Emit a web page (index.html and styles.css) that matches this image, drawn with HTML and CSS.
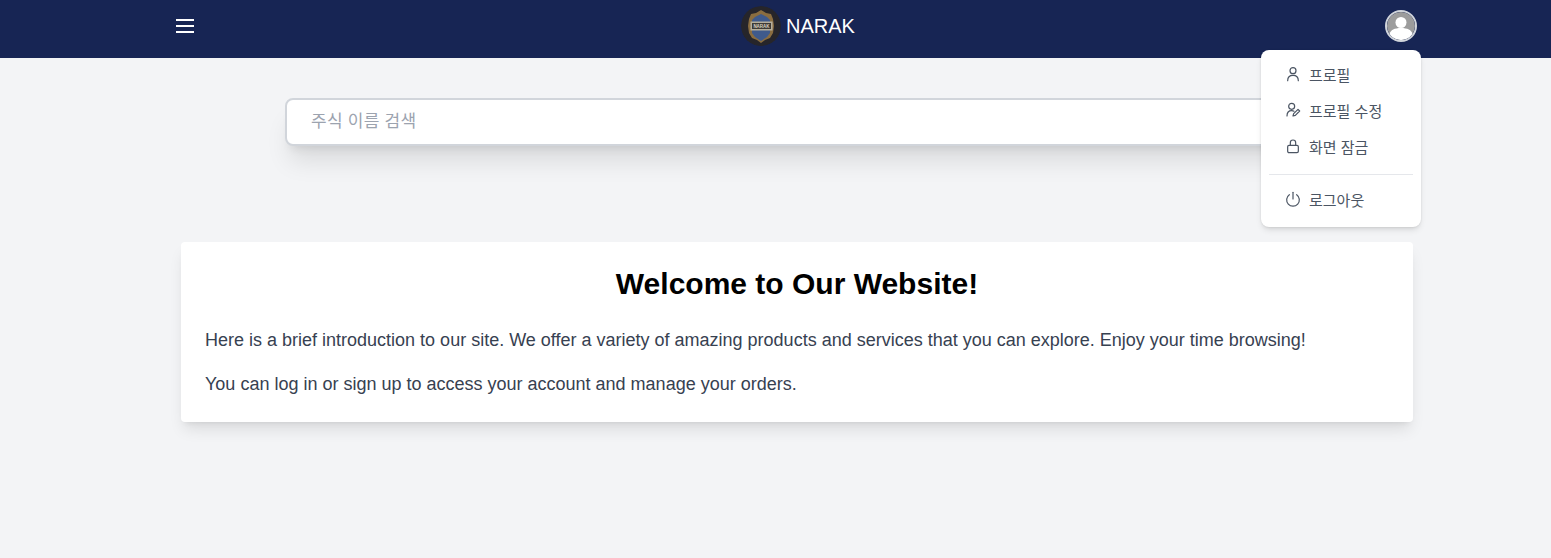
FILE: index.html
```html
<!DOCTYPE html>
<html lang="ko">
<head>
    <meta charset="UTF-8">
    <meta name="viewport" content="width=device-width, initial-scale=1.0">
    <title>NARAK</title>
    <link rel="stylesheet" href="styles.css">
</head>
<body>
    <header class="topbar">
        <button class="menu-btn" type="button" aria-label="menu">
            <svg width="18" height="14" viewBox="0 0 18 14"><path d="M0 1h18M0 7h18M0 13h18" stroke="#fff" stroke-width="2"/></svg>
        </button>
        <a class="brand" href="#">
            <svg class="brand-logo" width="40" height="40" viewBox="0 0 40 40">
                <circle cx="20" cy="20" r="20" fill="#26252a"/>
                <path d="M20 4l5 3 5 1 2 5 1 7-1 7-3 5-5 2-4 3-4-3-5-2-3-5-1-7 1-7 2-5 5-1z" fill="#8a6d40"/>
                <path d="M20 8l6 3 3 3v13l-3 4-6 4-6-4-3-4V14l3-3z" fill="#3f5a8c"/>
                <rect x="9.500" y="15.500" width="22" height="9" fill="#b5ae9c"/>
                <rect x="11" y="17" width="19" height="6" fill="#3e3a35"/>
                <text class="logo-text" x="20.500" y="21.800">NARAK</text>
            </svg>
            <span class="brand-name">NARAK</span>
        </a>
        <button class="avatar" type="button" aria-label="profile">
            <svg width="28" height="28" viewBox="0 0 28 28">
                <circle cx="14" cy="14" r="14" fill="#9c9c9c"/>
                <circle cx="14" cy="10.500" r="5.500" fill="#fff"/>
                <path d="M2.500 22c1-4 5-6 11.500-6s10.500 2 11.500 6a14 14 0 0 1-23 0z" fill="#fff"/>
            </svg>
        </button>
    </header>

    <div class="dropdown">
        <a class="dropdown-item" href="#">
            <svg class="item-icon" width="16" height="16" viewBox="0 0 24 24"><circle cx="12" cy="7" r="4.500"/><path d="M4 22c0-5 3.500-8 8-8s8 3 8 8"/></svg>
            <span>프로필</span>
        </a>
        <a class="dropdown-item" href="#">
            <svg class="item-icon" width="16" height="16" viewBox="0 0 24 24"><circle cx="10" cy="6.500" r="4.500"/><path d="M3 21c0-5 2.500-8 7-8 1.500 0 2.500.3 3.500.8"/><path d="M12 21l1-3.500 6.500-6.500 2.500 2.500-6.500 6.500z"/></svg>
            <span>프로필 수정</span>
        </a>
        <a class="dropdown-item" href="#">
            <svg class="item-icon" width="16" height="16" viewBox="0 0 24 24"><rect x="4" y="11" width="16" height="11" rx="2"/><path d="M8 11V7a4 4 0 0 1 8 0v4"/></svg>
            <span>화면 잠금</span>
        </a>
        <div class="dropdown-divider"></div>
        <a class="dropdown-item" href="#">
            <svg class="item-icon" width="16" height="16" viewBox="0 0 24 24"><path d="M12 2v10"/><path d="M6.500 5.500a9.500 9.500 0 1 0 11 0"/></svg>
            <span>로그아웃</span>
        </a>
    </div>

    <main class="content">
        <form class="search-box">
            <input class="search-input" type="text" placeholder="주식 이름 검색">
        </form>

        <section class="welcome-card">
            <h1>Welcome to Our Website!</h1>
            <p>Here is a brief introduction to our site. We offer a variety of amazing products and services that you can explore. Enjoy your time browsing!</p>
            <p>You can log in or sign up to access your account and manage your orders.</p>
        </section>
    </main>
</body>
</html>
```

FILE: styles.css
```css
/* General page */
* {
    box-sizing: border-box;
}

body {
    margin: 0;
    min-height: 100vh;
    background-color: #f3f4f6;
    font-family: "Liberation Sans", "Noto Sans CJK KR", Arial, sans-serif;
    color: #374151;
}

/* Top bar */
.topbar {
    height: 58px;
    padding: 0 134px 0 176px;
    background-color: #172554;
    display: flex;
    align-items: center;
    justify-content: space-between;
}

.menu-btn,
.avatar {
    padding: 0;
    border: none;
    background: none;
    display: flex;
    cursor: pointer;
}

.menu-btn {
    margin-top: -6px;
}

.brand {
    display: flex;
    align-items: center;
    gap: 5px;
    margin: -6px 0 0 17px;
    color: #fff;
    text-decoration: none;
}

.brand-logo {
    border-radius: 50%;
}

.logo-text {
    font-size: 4.500px;
    font-weight: bold;
    fill: #d8d2c2;
    text-anchor: middle;
}

.brand-name {
    font-size: 20px;
}

.avatar {
    width: 32px;
    height: 32px;
    margin-top: -6px;
    border: 2px solid #d1d5db;
    border-radius: 50%;
    overflow: hidden;
}

/* Profile menu */
.dropdown {
    position: absolute;
    top: 50px;
    left: 1261px;
    width: 160px;
    height: 177px;
    padding: 7px 8px;
    background-color: #fff;
    border-radius: 8px;
    box-shadow: 0 4px 6px -1px rgba(0, 0, 0, 0.1), 0 2px 4px -2px rgba(0, 0, 0, 0.1), 0 0 2px rgba(0, 0, 0, 0.08);
}

.dropdown-item {
    height: 36px;
    padding: 0 0 2px 16px;
    display: flex;
    align-items: center;
    gap: 8px;
    font-family: "Noto Sans CJK KR", sans-serif;
    font-size: 15px;
    color: #4b5563;
    text-decoration: none;
}

.item-icon {
    fill: none;
    stroke: #4b5563;
    stroke-width: 1.8;
    stroke-linecap: round;
    stroke-linejoin: round;
    margin-top: -1px;
}

.dropdown-divider {
    height: 1px;
    margin: 9px 0 7px;
    background-color: #e5e7eb;
}

/* Main column */
.content {
    padding: 40px 138px 0 181px;
}

.search-box {
    width: 1024px;
    margin: 0 auto;
}

.search-input {
    display: block;
    width: 100%;
    height: 48px;
    padding: 0 24px 5px;
    border: 2px solid #d1d5db;
    border-radius: 8px;
    outline: none;
    background-color: #fff;
    font-family: "Noto Sans CJK KR", sans-serif;
    font-size: 17px;
    letter-spacing: 0.25px;
    box-shadow: 0 20px 25px -5px rgba(0, 0, 0, 0.1), 0 8px 10px -6px rgba(0, 0, 0, 0.1);
}

.search-input::placeholder {
    color: #9ca3af;
}

.welcome-card {
    margin-top: 96px;
    height: 180px;
    padding: 24px;
    background-color: #fff;
    border-radius: 4px;
    box-shadow: 0 10px 15px -3px rgba(0, 0, 0, 0.1), 0 4px 6px -4px rgba(0, 0, 0, 0.1);
}

.welcome-card h1 {
    margin: 0 0 24px;
    font-size: 30px;
    line-height: 36px;
    text-align: center;
    color: #000;
}

.welcome-card p {
    margin: 0 0 16px;
    font-size: 18px;
    line-height: 28px;
}
```
